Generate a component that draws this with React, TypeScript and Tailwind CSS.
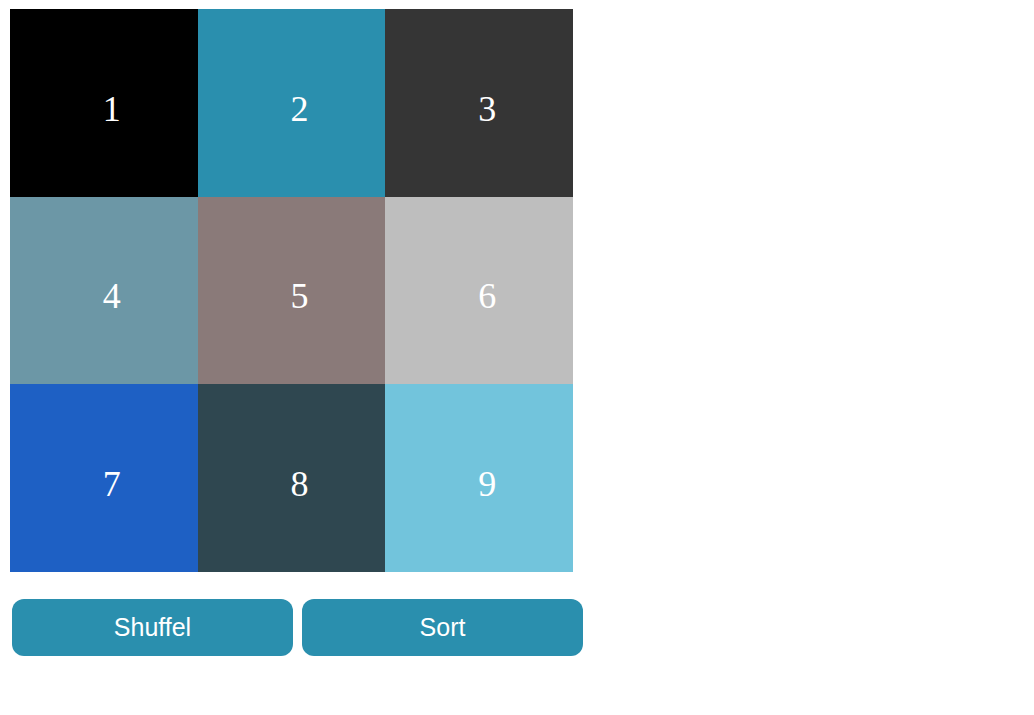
import React, { useState } from "react";

type Tile = { n: number; color: string };

const tiles: Tile[] = [
  { n: 1, color: "bg-[#000000]" },
  { n: 2, color: "bg-[#2a8fae]" },
  { n: 3, color: "bg-[#353535]" },
  { n: 4, color: "bg-[#6c97a6]" },
  { n: 5, color: "bg-[#8a7a79]" },
  { n: 6, color: "bg-[#bebebe]" },
  { n: 7, color: "bg-[#1e60c4]" },
  { n: 8, color: "bg-[#2f4750]" },
  { n: 9, color: "bg-[#72c4dc]" },
];

const App: React.FC = () => {
  const [order, setOrder] = useState<Tile[]>(tiles);

  const shuffle = () => {
    const next = [...order];
    for (let i = next.length - 1; i > 0; i--) {
      const j = Math.floor(Math.random() * (i + 1));
      [next[i], next[j]] = [next[j], next[i]];
    }
    setOrder(next);
  };

  const sort = () => setOrder([...order].sort((a, b) => a.n - b.n));

  return (
    <div className="pl-[10px] pt-[9px]">
      {/* Tiles */}
      <div className="grid grid-cols-3 w-[563px] h-[563px]">
        {order.map((t) => (
          <div
            key={t.n}
            className={`${t.color} flex items-center justify-center pl-4 pt-3 text-white text-[36px] font-['Liberation_Serif',serif]`}
          >
            {t.n}
          </div>
        ))}
      </div>

      {/* Buttons */}
      <div className="flex gap-[9px] pl-[2px] mt-[27px]">
        <button
          onClick={shuffle}
          className="w-[281px] h-[57px] rounded-xl bg-[#2a8fae] text-white text-[25px] font-['Liberation_Sans',Arial,sans-serif]"
        >
          Shuffel
        </button>
        <button
          onClick={sort}
          className="w-[281px] h-[57px] rounded-xl bg-[#2a8fae] text-white text-[25px] font-['Liberation_Sans',Arial,sans-serif]"
        >
          Sort
        </button>
      </div>
    </div>
  );
};

export default App;
